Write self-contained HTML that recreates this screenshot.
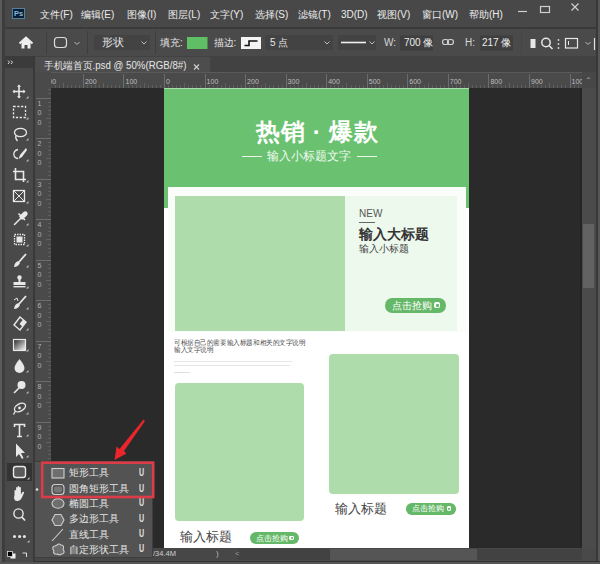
<!DOCTYPE html>
<html><head><meta charset="utf-8">
<style>
*{margin:0;padding:0;box-sizing:border-box}
html,body{width:600px;height:564px;overflow:hidden;background:#4a4a4a;font-family:"Liberation Sans",sans-serif;}
.a{position:absolute}
.t{position:absolute;white-space:nowrap;line-height:1}
svg{position:absolute;left:0;top:0;overflow:visible}
</style></head><body>

<div class="a" style="left:0px;top:0px;width:600px;height:564px;background:#494949"></div>
<div class="a" style="left:0px;top:0px;width:600px;height:27px;background:#484848"></div>
<div class="a" style="left:0px;top:27px;width:600px;height:2px;background:#3a3a3a"></div>
<div class="a" style="left:0px;top:29px;width:600px;height:27px;background:#4a4a4a"></div>
<div class="a" style="left:0px;top:0px;width:2px;height:564px;background:#5a5a5a"></div>
<div class="a" style="left:2px;top:0px;width:3px;height:564px;background:#3d3d3d"></div>
<div class="a" style="left:596px;top:0px;width:2px;height:564px;background:#383838"></div>
<div class="a" style="left:598px;top:0px;width:2px;height:564px;background:#575757"></div>
<div class="a" style="left:5px;top:56px;width:28px;height:12px;background:#3b3b3b"></div>
<div class="a" style="left:33px;top:56px;width:2px;height:508px;background:#393939"></div>
<div class="a" style="left:35px;top:56px;width:561px;height:16px;background:#424242"></div>
<div class="a" style="left:35px;top:57px;width:175px;height:15px;background:#4d4d4d"></div>
<div class="a" style="left:36px;top:72px;width:546px;height:16px;background:#4a4a4a"></div>
<div class="a" style="left:36px;top:72px;width:546px;height:1px;background:#5a5a5a"></div>
<div class="a" style="left:36px;top:88px;width:15px;height:460px;background:#4a4a4a"></div>
<div class="a" style="left:51px;top:88px;width:531px;height:460px;background:#2a2a2a"></div>
<div class="a" style="left:580px;top:88px;width:2px;height:460px;background:#252525"></div>
<div class="a" style="left:35px;top:548px;width:547px;height:13px;background:#474747"></div>
<div class="a" style="left:35px;top:561px;width:565px;height:1px;background:#333333"></div>
<div class="a" style="left:0px;top:562px;width:600px;height:2px;background:#565656"></div>
<div class="a" style="left:582px;top:72px;width:14px;height:476px;background:#4b4b4b"></div>
<div class="a" style="left:583px;top:224px;width:11px;height:64px;background:#626262"></div>
<div class="a" style="left:238px;top:549px;width:344px;height:11px;background:#424242"></div>
<div class="a" style="left:330px;top:549px;width:147px;height:11px;background:#555555"></div>
<div class="a" style="left:12px;top:7.5px;width:12.5px;height:11.5px;background:#0a1f33;border:1px solid #557d9c"></div>
<div class="t" style="left:14px;top:9.5px;font-size:7.5px;font-weight:bold;color:#8ab8dc">Ps</div>
<div class="t" style="left:40px;top:9.5px;font-size:10px;font-weight:500;color:#ececec">文件(F)</div>
<div class="t" style="left:81px;top:9.5px;font-size:10px;font-weight:500;color:#ececec">编辑(E)</div>
<div class="t" style="left:127px;top:9.5px;font-size:10px;font-weight:500;color:#ececec">图像(I)</div>
<div class="t" style="left:168px;top:9.5px;font-size:10px;font-weight:500;color:#ececec">图层(L)</div>
<div class="t" style="left:210px;top:9.5px;font-size:10px;font-weight:500;color:#ececec">文字(Y)</div>
<div class="t" style="left:255px;top:9.5px;font-size:10px;font-weight:500;color:#ececec">选择(S)</div>
<div class="t" style="left:298px;top:9.5px;font-size:10px;font-weight:500;color:#ececec">滤镜(T)</div>
<div class="t" style="left:341px;top:9.5px;font-size:10px;font-weight:500;color:#ececec">3D(D)</div>
<div class="t" style="left:377px;top:9.5px;font-size:10px;font-weight:500;color:#ececec">视图(V)</div>
<div class="t" style="left:422px;top:9.5px;font-size:10px;font-weight:500;color:#ececec">窗口(W)</div>
<div class="t" style="left:469px;top:9.5px;font-size:10px;font-weight:500;color:#ececec">帮助(H)</div>
<svg width="600" height="564" viewBox="0 0 600 564"><line x1="518" y1="11.5" x2="527" y2="11.5" stroke="#cfcfcf" stroke-width="1.2"/><rect x="540.5" y="6.5" width="9" height="6" fill="none" stroke="#cfcfcf" stroke-width="1.2"/><path d="M571.5 3.5 L578.5 10.5 M578.5 3.5 L571.5 10.5" stroke="#cfcfcf" stroke-width="1.2"/><path d="M19.5 43.5 L26 37.5 L32.5 43.5" fill="none" stroke="#f0f0f0" stroke-width="2"/><path d="M21.5 42.5 L26 38.5 L30.5 42.5 L30.5 48.5 L27.5 48.5 L27.5 45 L24.5 45 L24.5 48.5 L21.5 48.5 Z" fill="#f0f0f0"/><line x1="46.5" y1="31" x2="46.5" y2="54" stroke="#3e3e3e"/><rect x="54.5" y="37.5" width="12" height="10" rx="3" fill="none" stroke="#dcdcdc" stroke-width="1.2"/><path d="M74.5 42 L77 44.5 L79.5 42" fill="none" stroke="#bdbdbd" stroke-width="1"/><line x1="87.5" y1="31" x2="87.5" y2="54" stroke="#3e3e3e"/><rect x="94" y="35" width="56" height="15" fill="#434343"/><path d="M141.5 41.5 L144 44 L146.5 41.5" fill="none" stroke="#bdbdbd" stroke-width="1"/><line x1="155.5" y1="31" x2="155.5" y2="54" stroke="#3e3e3e"/><rect x="187" y="37" width="20.5" height="12" fill="#5fbf64"/><rect x="241" y="37" width="20" height="12" fill="#f4f4f4"/><path d="M244.5 45.5 L249 45.5 L249 41 L257.5 41" fill="none" stroke="#111" stroke-width="1.6"/><rect x="265" y="35" width="68" height="15" fill="#434343"/><path d="M324.5 41.5 L327 44 L329.5 41.5" fill="none" stroke="#bdbdbd" stroke-width="1"/><rect x="338" y="35" width="38" height="15" fill="#434343"/><line x1="341" y1="42.5" x2="366" y2="42.5" stroke="#f0f0f0" stroke-width="1.6"/><path d="M369.5 41.5 L372 44 L374.5 41.5" fill="none" stroke="#bdbdbd" stroke-width="1"/><rect x="400" y="35.5" width="33" height="15" fill="#3f3f3f"/><rect x="442.5" y="39.5" width="6" height="5" rx="2.5" fill="none" stroke="#d0d0d0" stroke-width="1.2"/><rect x="447.5" y="39.5" width="6" height="5" rx="2.5" fill="none" stroke="#d0d0d0" stroke-width="1.2"/><rect x="480" y="35.5" width="33" height="15" fill="#3f3f3f"/><line x1="521.5" y1="31" x2="521.5" y2="54" stroke="#454545"/><rect x="530.5" y="39" width="5" height="9" fill="#e6e6e6"/><circle cx="546" cy="42.5" r="4.2" fill="none" stroke="#e6e6e6" stroke-width="1.5"/><line x1="549" y1="45.5" x2="552.5" y2="49" stroke="#e6e6e6" stroke-width="1.6"/><circle cx="558.5" cy="40" r="0.9" fill="#d8d8d8"/><circle cx="558.5" cy="44" r="0.9" fill="#d8d8d8"/><circle cx="558.5" cy="48" r="0.9" fill="#d8d8d8"/><rect x="565.5" y="38.5" width="12" height="9.5" fill="none" stroke="#e6e6e6" stroke-width="1.2"/><line x1="568.5" y1="41" x2="568.5" y2="45" stroke="#e6e6e6" stroke-width="1"/><path d="M585.5 42 L588 44.5 L590.5 42" fill="none" stroke="#bdbdbd" stroke-width="1"/><line x1="594.5" y1="38" x2="594.5" y2="50" stroke="#e0e0e0" stroke-width="1.2"/><path d="M194 64.5 L199 69.5 M199 64.5 L194 69.5" stroke="#cfcfcf" stroke-width="1.1"/><path d="M8 60.5 L9.5 62.2 L8 64 M11 60.5 L12.5 62.2 L11 64" fill="none" stroke="#d8d8d8" stroke-width="1"/><line x1="55.5" y1="85.0" x2="55.5" y2="88" stroke="#5e5e5e" stroke-width="1"/><line x1="59.5" y1="85.0" x2="59.5" y2="88" stroke="#5e5e5e" stroke-width="1"/><line x1="63.5" y1="83.0" x2="63.5" y2="88" stroke="#626262" stroke-width="1"/><line x1="67.5" y1="85.0" x2="67.5" y2="88" stroke="#5e5e5e" stroke-width="1"/><line x1="71.5" y1="85.0" x2="71.5" y2="88" stroke="#5e5e5e" stroke-width="1"/><line x1="75.5" y1="85.0" x2="75.5" y2="88" stroke="#5e5e5e" stroke-width="1"/><line x1="79.5" y1="85.0" x2="79.5" y2="88" stroke="#5e5e5e" stroke-width="1"/><line x1="83.5" y1="74.0" x2="83.5" y2="88" stroke="#6c6c6c" stroke-width="1"/><line x1="87.5" y1="85.0" x2="87.5" y2="88" stroke="#5e5e5e" stroke-width="1"/><line x1="91.5" y1="85.0" x2="91.5" y2="88" stroke="#5e5e5e" stroke-width="1"/><line x1="95.5" y1="85.0" x2="95.5" y2="88" stroke="#5e5e5e" stroke-width="1"/><line x1="99.5" y1="85.0" x2="99.5" y2="88" stroke="#5e5e5e" stroke-width="1"/><line x1="103.5" y1="83.0" x2="103.5" y2="88" stroke="#626262" stroke-width="1"/><line x1="107.5" y1="85.0" x2="107.5" y2="88" stroke="#5e5e5e" stroke-width="1"/><line x1="111.5" y1="85.0" x2="111.5" y2="88" stroke="#5e5e5e" stroke-width="1"/><line x1="115.5" y1="85.0" x2="115.5" y2="88" stroke="#5e5e5e" stroke-width="1"/><line x1="119.5" y1="85.0" x2="119.5" y2="88" stroke="#5e5e5e" stroke-width="1"/><line x1="123.5" y1="74.0" x2="123.5" y2="88" stroke="#6c6c6c" stroke-width="1"/><line x1="128.5" y1="85.0" x2="128.5" y2="88" stroke="#5e5e5e" stroke-width="1"/><line x1="132.5" y1="85.0" x2="132.5" y2="88" stroke="#5e5e5e" stroke-width="1"/><line x1="136.5" y1="85.0" x2="136.5" y2="88" stroke="#5e5e5e" stroke-width="1"/><line x1="140.5" y1="85.0" x2="140.5" y2="88" stroke="#5e5e5e" stroke-width="1"/><line x1="144.5" y1="83.0" x2="144.5" y2="88" stroke="#626262" stroke-width="1"/><line x1="148.5" y1="85.0" x2="148.5" y2="88" stroke="#5e5e5e" stroke-width="1"/><line x1="152.5" y1="85.0" x2="152.5" y2="88" stroke="#5e5e5e" stroke-width="1"/><line x1="156.5" y1="85.0" x2="156.5" y2="88" stroke="#5e5e5e" stroke-width="1"/><line x1="160.5" y1="85.0" x2="160.5" y2="88" stroke="#5e5e5e" stroke-width="1"/><line x1="164.5" y1="74.0" x2="164.5" y2="88" stroke="#6c6c6c" stroke-width="1"/><line x1="168.5" y1="85.0" x2="168.5" y2="88" stroke="#5e5e5e" stroke-width="1"/><line x1="172.5" y1="85.0" x2="172.5" y2="88" stroke="#5e5e5e" stroke-width="1"/><line x1="176.5" y1="85.0" x2="176.5" y2="88" stroke="#5e5e5e" stroke-width="1"/><line x1="180.5" y1="85.0" x2="180.5" y2="88" stroke="#5e5e5e" stroke-width="1"/><line x1="184.5" y1="83.0" x2="184.5" y2="88" stroke="#626262" stroke-width="1"/><line x1="188.5" y1="85.0" x2="188.5" y2="88" stroke="#5e5e5e" stroke-width="1"/><line x1="192.5" y1="85.0" x2="192.5" y2="88" stroke="#5e5e5e" stroke-width="1"/><line x1="196.5" y1="85.0" x2="196.5" y2="88" stroke="#5e5e5e" stroke-width="1"/><line x1="200.5" y1="85.0" x2="200.5" y2="88" stroke="#5e5e5e" stroke-width="1"/><line x1="205.5" y1="74.0" x2="205.5" y2="88" stroke="#6c6c6c" stroke-width="1"/><line x1="209.5" y1="85.0" x2="209.5" y2="88" stroke="#5e5e5e" stroke-width="1"/><line x1="213.5" y1="85.0" x2="213.5" y2="88" stroke="#5e5e5e" stroke-width="1"/><line x1="217.5" y1="85.0" x2="217.5" y2="88" stroke="#5e5e5e" stroke-width="1"/><line x1="221.5" y1="85.0" x2="221.5" y2="88" stroke="#5e5e5e" stroke-width="1"/><line x1="225.5" y1="83.0" x2="225.5" y2="88" stroke="#626262" stroke-width="1"/><line x1="229.5" y1="85.0" x2="229.5" y2="88" stroke="#5e5e5e" stroke-width="1"/><line x1="233.5" y1="85.0" x2="233.5" y2="88" stroke="#5e5e5e" stroke-width="1"/><line x1="237.5" y1="85.0" x2="237.5" y2="88" stroke="#5e5e5e" stroke-width="1"/><line x1="241.5" y1="85.0" x2="241.5" y2="88" stroke="#5e5e5e" stroke-width="1"/><line x1="245.5" y1="74.0" x2="245.5" y2="88" stroke="#6c6c6c" stroke-width="1"/><line x1="249.5" y1="85.0" x2="249.5" y2="88" stroke="#5e5e5e" stroke-width="1"/><line x1="253.5" y1="85.0" x2="253.5" y2="88" stroke="#5e5e5e" stroke-width="1"/><line x1="257.5" y1="85.0" x2="257.5" y2="88" stroke="#5e5e5e" stroke-width="1"/><line x1="261.5" y1="85.0" x2="261.5" y2="88" stroke="#5e5e5e" stroke-width="1"/><line x1="265.5" y1="83.0" x2="265.5" y2="88" stroke="#626262" stroke-width="1"/><line x1="269.5" y1="85.0" x2="269.5" y2="88" stroke="#5e5e5e" stroke-width="1"/><line x1="273.5" y1="85.0" x2="273.5" y2="88" stroke="#5e5e5e" stroke-width="1"/><line x1="278.5" y1="85.0" x2="278.5" y2="88" stroke="#5e5e5e" stroke-width="1"/><line x1="282.5" y1="85.0" x2="282.5" y2="88" stroke="#5e5e5e" stroke-width="1"/><line x1="286.5" y1="74.0" x2="286.5" y2="88" stroke="#6c6c6c" stroke-width="1"/><line x1="290.5" y1="85.0" x2="290.5" y2="88" stroke="#5e5e5e" stroke-width="1"/><line x1="294.5" y1="85.0" x2="294.5" y2="88" stroke="#5e5e5e" stroke-width="1"/><line x1="298.5" y1="85.0" x2="298.5" y2="88" stroke="#5e5e5e" stroke-width="1"/><line x1="302.5" y1="85.0" x2="302.5" y2="88" stroke="#5e5e5e" stroke-width="1"/><line x1="306.5" y1="83.0" x2="306.5" y2="88" stroke="#626262" stroke-width="1"/><line x1="310.5" y1="85.0" x2="310.5" y2="88" stroke="#5e5e5e" stroke-width="1"/><line x1="314.5" y1="85.0" x2="314.5" y2="88" stroke="#5e5e5e" stroke-width="1"/><line x1="318.5" y1="85.0" x2="318.5" y2="88" stroke="#5e5e5e" stroke-width="1"/><line x1="322.5" y1="85.0" x2="322.5" y2="88" stroke="#5e5e5e" stroke-width="1"/><line x1="326.5" y1="74.0" x2="326.5" y2="88" stroke="#6c6c6c" stroke-width="1"/><line x1="330.5" y1="85.0" x2="330.5" y2="88" stroke="#5e5e5e" stroke-width="1"/><line x1="334.5" y1="85.0" x2="334.5" y2="88" stroke="#5e5e5e" stroke-width="1"/><line x1="338.5" y1="85.0" x2="338.5" y2="88" stroke="#5e5e5e" stroke-width="1"/><line x1="342.5" y1="85.0" x2="342.5" y2="88" stroke="#5e5e5e" stroke-width="1"/><line x1="346.5" y1="83.0" x2="346.5" y2="88" stroke="#626262" stroke-width="1"/><line x1="351.5" y1="85.0" x2="351.5" y2="88" stroke="#5e5e5e" stroke-width="1"/><line x1="355.5" y1="85.0" x2="355.5" y2="88" stroke="#5e5e5e" stroke-width="1"/><line x1="359.5" y1="85.0" x2="359.5" y2="88" stroke="#5e5e5e" stroke-width="1"/><line x1="363.5" y1="85.0" x2="363.5" y2="88" stroke="#5e5e5e" stroke-width="1"/><line x1="367.5" y1="74.0" x2="367.5" y2="88" stroke="#6c6c6c" stroke-width="1"/><line x1="371.5" y1="85.0" x2="371.5" y2="88" stroke="#5e5e5e" stroke-width="1"/><line x1="375.5" y1="85.0" x2="375.5" y2="88" stroke="#5e5e5e" stroke-width="1"/><line x1="379.5" y1="85.0" x2="379.5" y2="88" stroke="#5e5e5e" stroke-width="1"/><line x1="383.5" y1="85.0" x2="383.5" y2="88" stroke="#5e5e5e" stroke-width="1"/><line x1="387.5" y1="83.0" x2="387.5" y2="88" stroke="#626262" stroke-width="1"/><line x1="391.5" y1="85.0" x2="391.5" y2="88" stroke="#5e5e5e" stroke-width="1"/><line x1="395.5" y1="85.0" x2="395.5" y2="88" stroke="#5e5e5e" stroke-width="1"/><line x1="399.5" y1="85.0" x2="399.5" y2="88" stroke="#5e5e5e" stroke-width="1"/><line x1="403.5" y1="85.0" x2="403.5" y2="88" stroke="#5e5e5e" stroke-width="1"/><line x1="407.5" y1="74.0" x2="407.5" y2="88" stroke="#6c6c6c" stroke-width="1"/><line x1="411.5" y1="85.0" x2="411.5" y2="88" stroke="#5e5e5e" stroke-width="1"/><line x1="415.5" y1="85.0" x2="415.5" y2="88" stroke="#5e5e5e" stroke-width="1"/><line x1="419.5" y1="85.0" x2="419.5" y2="88" stroke="#5e5e5e" stroke-width="1"/><line x1="424.5" y1="85.0" x2="424.5" y2="88" stroke="#5e5e5e" stroke-width="1"/><line x1="428.5" y1="83.0" x2="428.5" y2="88" stroke="#626262" stroke-width="1"/><line x1="432.5" y1="85.0" x2="432.5" y2="88" stroke="#5e5e5e" stroke-width="1"/><line x1="436.5" y1="85.0" x2="436.5" y2="88" stroke="#5e5e5e" stroke-width="1"/><line x1="440.5" y1="85.0" x2="440.5" y2="88" stroke="#5e5e5e" stroke-width="1"/><line x1="444.5" y1="85.0" x2="444.5" y2="88" stroke="#5e5e5e" stroke-width="1"/><line x1="448.5" y1="74.0" x2="448.5" y2="88" stroke="#6c6c6c" stroke-width="1"/><line x1="452.5" y1="85.0" x2="452.5" y2="88" stroke="#5e5e5e" stroke-width="1"/><line x1="456.5" y1="85.0" x2="456.5" y2="88" stroke="#5e5e5e" stroke-width="1"/><line x1="460.5" y1="85.0" x2="460.5" y2="88" stroke="#5e5e5e" stroke-width="1"/><line x1="464.5" y1="85.0" x2="464.5" y2="88" stroke="#5e5e5e" stroke-width="1"/><line x1="468.5" y1="83.0" x2="468.5" y2="88" stroke="#626262" stroke-width="1"/><line x1="472.5" y1="85.0" x2="472.5" y2="88" stroke="#5e5e5e" stroke-width="1"/><line x1="476.5" y1="85.0" x2="476.5" y2="88" stroke="#5e5e5e" stroke-width="1"/><line x1="480.5" y1="85.0" x2="480.5" y2="88" stroke="#5e5e5e" stroke-width="1"/><line x1="484.5" y1="85.0" x2="484.5" y2="88" stroke="#5e5e5e" stroke-width="1"/><line x1="488.5" y1="74.0" x2="488.5" y2="88" stroke="#6c6c6c" stroke-width="1"/><line x1="492.5" y1="85.0" x2="492.5" y2="88" stroke="#5e5e5e" stroke-width="1"/><line x1="497.5" y1="85.0" x2="497.5" y2="88" stroke="#5e5e5e" stroke-width="1"/><line x1="501.5" y1="85.0" x2="501.5" y2="88" stroke="#5e5e5e" stroke-width="1"/><line x1="505.5" y1="85.0" x2="505.5" y2="88" stroke="#5e5e5e" stroke-width="1"/><line x1="509.5" y1="83.0" x2="509.5" y2="88" stroke="#626262" stroke-width="1"/><line x1="513.5" y1="85.0" x2="513.5" y2="88" stroke="#5e5e5e" stroke-width="1"/><line x1="517.5" y1="85.0" x2="517.5" y2="88" stroke="#5e5e5e" stroke-width="1"/><line x1="521.5" y1="85.0" x2="521.5" y2="88" stroke="#5e5e5e" stroke-width="1"/><line x1="525.5" y1="85.0" x2="525.5" y2="88" stroke="#5e5e5e" stroke-width="1"/><line x1="529.5" y1="74.0" x2="529.5" y2="88" stroke="#6c6c6c" stroke-width="1"/><line x1="533.5" y1="85.0" x2="533.5" y2="88" stroke="#5e5e5e" stroke-width="1"/><line x1="537.5" y1="85.0" x2="537.5" y2="88" stroke="#5e5e5e" stroke-width="1"/><line x1="541.5" y1="85.0" x2="541.5" y2="88" stroke="#5e5e5e" stroke-width="1"/><line x1="545.5" y1="85.0" x2="545.5" y2="88" stroke="#5e5e5e" stroke-width="1"/><line x1="549.5" y1="83.0" x2="549.5" y2="88" stroke="#626262" stroke-width="1"/><line x1="553.5" y1="85.0" x2="553.5" y2="88" stroke="#5e5e5e" stroke-width="1"/><line x1="557.5" y1="85.0" x2="557.5" y2="88" stroke="#5e5e5e" stroke-width="1"/><line x1="561.5" y1="85.0" x2="561.5" y2="88" stroke="#5e5e5e" stroke-width="1"/><line x1="565.5" y1="85.0" x2="565.5" y2="88" stroke="#5e5e5e" stroke-width="1"/><line x1="570.5" y1="74.0" x2="570.5" y2="88" stroke="#6c6c6c" stroke-width="1"/><line x1="574.5" y1="85.0" x2="574.5" y2="88" stroke="#5e5e5e" stroke-width="1"/><line x1="578.5" y1="85.0" x2="578.5" y2="88" stroke="#5e5e5e" stroke-width="1"/><line x1="48.0" y1="89.5" x2="51" y2="89.5" stroke="#5e5e5e" stroke-width="1"/><line x1="48.0" y1="93.5" x2="51" y2="93.5" stroke="#5e5e5e" stroke-width="1"/><line x1="36.0" y1="98.5" x2="51" y2="98.5" stroke="#6c6c6c" stroke-width="1"/><line x1="48.0" y1="102.5" x2="51" y2="102.5" stroke="#5e5e5e" stroke-width="1"/><line x1="48.0" y1="106.5" x2="51" y2="106.5" stroke="#5e5e5e" stroke-width="1"/><line x1="48.0" y1="110.5" x2="51" y2="110.5" stroke="#5e5e5e" stroke-width="1"/><line x1="48.0" y1="114.5" x2="51" y2="114.5" stroke="#5e5e5e" stroke-width="1"/><line x1="46.0" y1="118.5" x2="51" y2="118.5" stroke="#626262" stroke-width="1"/><line x1="48.0" y1="122.5" x2="51" y2="122.5" stroke="#5e5e5e" stroke-width="1"/><line x1="48.0" y1="126.5" x2="51" y2="126.5" stroke="#5e5e5e" stroke-width="1"/><line x1="48.0" y1="130.5" x2="51" y2="130.5" stroke="#5e5e5e" stroke-width="1"/><line x1="48.0" y1="134.5" x2="51" y2="134.5" stroke="#5e5e5e" stroke-width="1"/><line x1="36.0" y1="138.5" x2="51" y2="138.5" stroke="#6c6c6c" stroke-width="1"/><line x1="48.0" y1="142.5" x2="51" y2="142.5" stroke="#5e5e5e" stroke-width="1"/><line x1="48.0" y1="146.5" x2="51" y2="146.5" stroke="#5e5e5e" stroke-width="1"/><line x1="48.0" y1="150.5" x2="51" y2="150.5" stroke="#5e5e5e" stroke-width="1"/><line x1="48.0" y1="154.5" x2="51" y2="154.5" stroke="#5e5e5e" stroke-width="1"/><line x1="46.0" y1="158.5" x2="51" y2="158.5" stroke="#626262" stroke-width="1"/><line x1="48.0" y1="162.5" x2="51" y2="162.5" stroke="#5e5e5e" stroke-width="1"/><line x1="48.0" y1="166.5" x2="51" y2="166.5" stroke="#5e5e5e" stroke-width="1"/><line x1="48.0" y1="171.5" x2="51" y2="171.5" stroke="#5e5e5e" stroke-width="1"/><line x1="48.0" y1="175.5" x2="51" y2="175.5" stroke="#5e5e5e" stroke-width="1"/><line x1="36.0" y1="179.5" x2="51" y2="179.5" stroke="#6c6c6c" stroke-width="1"/><line x1="48.0" y1="183.5" x2="51" y2="183.5" stroke="#5e5e5e" stroke-width="1"/><line x1="48.0" y1="187.5" x2="51" y2="187.5" stroke="#5e5e5e" stroke-width="1"/><line x1="48.0" y1="191.5" x2="51" y2="191.5" stroke="#5e5e5e" stroke-width="1"/><line x1="48.0" y1="195.5" x2="51" y2="195.5" stroke="#5e5e5e" stroke-width="1"/><line x1="46.0" y1="199.5" x2="51" y2="199.5" stroke="#626262" stroke-width="1"/><line x1="48.0" y1="203.5" x2="51" y2="203.5" stroke="#5e5e5e" stroke-width="1"/><line x1="48.0" y1="207.5" x2="51" y2="207.5" stroke="#5e5e5e" stroke-width="1"/><line x1="48.0" y1="211.5" x2="51" y2="211.5" stroke="#5e5e5e" stroke-width="1"/><line x1="48.0" y1="215.5" x2="51" y2="215.5" stroke="#5e5e5e" stroke-width="1"/><line x1="36.0" y1="219.5" x2="51" y2="219.5" stroke="#6c6c6c" stroke-width="1"/><line x1="48.0" y1="223.5" x2="51" y2="223.5" stroke="#5e5e5e" stroke-width="1"/><line x1="48.0" y1="227.5" x2="51" y2="227.5" stroke="#5e5e5e" stroke-width="1"/><line x1="48.0" y1="231.5" x2="51" y2="231.5" stroke="#5e5e5e" stroke-width="1"/><line x1="48.0" y1="235.5" x2="51" y2="235.5" stroke="#5e5e5e" stroke-width="1"/><line x1="46.0" y1="239.5" x2="51" y2="239.5" stroke="#626262" stroke-width="1"/><line x1="48.0" y1="244.5" x2="51" y2="244.5" stroke="#5e5e5e" stroke-width="1"/><line x1="48.0" y1="248.5" x2="51" y2="248.5" stroke="#5e5e5e" stroke-width="1"/><line x1="48.0" y1="252.5" x2="51" y2="252.5" stroke="#5e5e5e" stroke-width="1"/><line x1="48.0" y1="256.5" x2="51" y2="256.5" stroke="#5e5e5e" stroke-width="1"/><line x1="36.0" y1="260.5" x2="51" y2="260.5" stroke="#6c6c6c" stroke-width="1"/><line x1="48.0" y1="264.5" x2="51" y2="264.5" stroke="#5e5e5e" stroke-width="1"/><line x1="48.0" y1="268.5" x2="51" y2="268.5" stroke="#5e5e5e" stroke-width="1"/><line x1="48.0" y1="272.5" x2="51" y2="272.5" stroke="#5e5e5e" stroke-width="1"/><line x1="48.0" y1="276.5" x2="51" y2="276.5" stroke="#5e5e5e" stroke-width="1"/><line x1="46.0" y1="280.5" x2="51" y2="280.5" stroke="#626262" stroke-width="1"/><line x1="48.0" y1="284.5" x2="51" y2="284.5" stroke="#5e5e5e" stroke-width="1"/><line x1="48.0" y1="288.5" x2="51" y2="288.5" stroke="#5e5e5e" stroke-width="1"/><line x1="48.0" y1="292.5" x2="51" y2="292.5" stroke="#5e5e5e" stroke-width="1"/><line x1="48.0" y1="296.5" x2="51" y2="296.5" stroke="#5e5e5e" stroke-width="1"/><line x1="36.0" y1="300.5" x2="51" y2="300.5" stroke="#6c6c6c" stroke-width="1"/><line x1="48.0" y1="304.5" x2="51" y2="304.5" stroke="#5e5e5e" stroke-width="1"/><line x1="48.0" y1="308.5" x2="51" y2="308.5" stroke="#5e5e5e" stroke-width="1"/><line x1="48.0" y1="312.5" x2="51" y2="312.5" stroke="#5e5e5e" stroke-width="1"/><line x1="48.0" y1="317.5" x2="51" y2="317.5" stroke="#5e5e5e" stroke-width="1"/><line x1="46.0" y1="321.5" x2="51" y2="321.5" stroke="#626262" stroke-width="1"/><line x1="48.0" y1="325.5" x2="51" y2="325.5" stroke="#5e5e5e" stroke-width="1"/><line x1="48.0" y1="329.5" x2="51" y2="329.5" stroke="#5e5e5e" stroke-width="1"/><line x1="48.0" y1="333.5" x2="51" y2="333.5" stroke="#5e5e5e" stroke-width="1"/><line x1="48.0" y1="337.5" x2="51" y2="337.5" stroke="#5e5e5e" stroke-width="1"/><line x1="36.0" y1="341.5" x2="51" y2="341.5" stroke="#6c6c6c" stroke-width="1"/><line x1="48.0" y1="345.5" x2="51" y2="345.5" stroke="#5e5e5e" stroke-width="1"/><line x1="48.0" y1="349.5" x2="51" y2="349.5" stroke="#5e5e5e" stroke-width="1"/><line x1="48.0" y1="353.5" x2="51" y2="353.5" stroke="#5e5e5e" stroke-width="1"/><line x1="48.0" y1="357.5" x2="51" y2="357.5" stroke="#5e5e5e" stroke-width="1"/><line x1="46.0" y1="361.5" x2="51" y2="361.5" stroke="#626262" stroke-width="1"/><line x1="48.0" y1="365.5" x2="51" y2="365.5" stroke="#5e5e5e" stroke-width="1"/><line x1="48.0" y1="369.5" x2="51" y2="369.5" stroke="#5e5e5e" stroke-width="1"/><line x1="48.0" y1="373.5" x2="51" y2="373.5" stroke="#5e5e5e" stroke-width="1"/><line x1="48.0" y1="377.5" x2="51" y2="377.5" stroke="#5e5e5e" stroke-width="1"/><line x1="36.0" y1="381.5" x2="51" y2="381.5" stroke="#6c6c6c" stroke-width="1"/><line x1="48.0" y1="385.5" x2="51" y2="385.5" stroke="#5e5e5e" stroke-width="1"/><line x1="48.0" y1="390.5" x2="51" y2="390.5" stroke="#5e5e5e" stroke-width="1"/><line x1="48.0" y1="394.5" x2="51" y2="394.5" stroke="#5e5e5e" stroke-width="1"/><line x1="48.0" y1="398.5" x2="51" y2="398.5" stroke="#5e5e5e" stroke-width="1"/><line x1="46.0" y1="402.5" x2="51" y2="402.5" stroke="#626262" stroke-width="1"/><line x1="48.0" y1="406.5" x2="51" y2="406.5" stroke="#5e5e5e" stroke-width="1"/><line x1="48.0" y1="410.5" x2="51" y2="410.5" stroke="#5e5e5e" stroke-width="1"/><line x1="48.0" y1="414.5" x2="51" y2="414.5" stroke="#5e5e5e" stroke-width="1"/><line x1="48.0" y1="418.5" x2="51" y2="418.5" stroke="#5e5e5e" stroke-width="1"/><line x1="36.0" y1="422.5" x2="51" y2="422.5" stroke="#6c6c6c" stroke-width="1"/><line x1="48.0" y1="426.5" x2="51" y2="426.5" stroke="#5e5e5e" stroke-width="1"/><line x1="48.0" y1="430.5" x2="51" y2="430.5" stroke="#5e5e5e" stroke-width="1"/><line x1="48.0" y1="434.5" x2="51" y2="434.5" stroke="#5e5e5e" stroke-width="1"/><line x1="48.0" y1="438.5" x2="51" y2="438.5" stroke="#5e5e5e" stroke-width="1"/><line x1="46.0" y1="442.5" x2="51" y2="442.5" stroke="#626262" stroke-width="1"/><line x1="48.0" y1="446.5" x2="51" y2="446.5" stroke="#5e5e5e" stroke-width="1"/><line x1="48.0" y1="450.5" x2="51" y2="450.5" stroke="#5e5e5e" stroke-width="1"/><line x1="48.0" y1="454.5" x2="51" y2="454.5" stroke="#5e5e5e" stroke-width="1"/><line x1="48.0" y1="458.5" x2="51" y2="458.5" stroke="#5e5e5e" stroke-width="1"/><line x1="36.0" y1="462.5" x2="51" y2="462.5" stroke="#6c6c6c" stroke-width="1"/><line x1="48.0" y1="467.5" x2="51" y2="467.5" stroke="#5e5e5e" stroke-width="1"/><line x1="48.0" y1="471.5" x2="51" y2="471.5" stroke="#5e5e5e" stroke-width="1"/><line x1="48.0" y1="475.5" x2="51" y2="475.5" stroke="#5e5e5e" stroke-width="1"/><line x1="48.0" y1="479.5" x2="51" y2="479.5" stroke="#5e5e5e" stroke-width="1"/><line x1="46.0" y1="483.5" x2="51" y2="483.5" stroke="#626262" stroke-width="1"/><line x1="48.0" y1="487.5" x2="51" y2="487.5" stroke="#5e5e5e" stroke-width="1"/><line x1="48.0" y1="491.5" x2="51" y2="491.5" stroke="#5e5e5e" stroke-width="1"/><line x1="48.0" y1="495.5" x2="51" y2="495.5" stroke="#5e5e5e" stroke-width="1"/><line x1="48.0" y1="499.5" x2="51" y2="499.5" stroke="#5e5e5e" stroke-width="1"/><line x1="36.0" y1="503.5" x2="51" y2="503.5" stroke="#6c6c6c" stroke-width="1"/><line x1="48.0" y1="507.5" x2="51" y2="507.5" stroke="#5e5e5e" stroke-width="1"/><line x1="48.0" y1="511.5" x2="51" y2="511.5" stroke="#5e5e5e" stroke-width="1"/><line x1="48.0" y1="515.5" x2="51" y2="515.5" stroke="#5e5e5e" stroke-width="1"/><line x1="48.0" y1="519.5" x2="51" y2="519.5" stroke="#5e5e5e" stroke-width="1"/><line x1="46.0" y1="523.5" x2="51" y2="523.5" stroke="#626262" stroke-width="1"/><line x1="48.0" y1="527.5" x2="51" y2="527.5" stroke="#5e5e5e" stroke-width="1"/><line x1="48.0" y1="531.5" x2="51" y2="531.5" stroke="#5e5e5e" stroke-width="1"/><line x1="48.0" y1="535.5" x2="51" y2="535.5" stroke="#5e5e5e" stroke-width="1"/><line x1="48.0" y1="540.5" x2="51" y2="540.5" stroke="#5e5e5e" stroke-width="1"/><line x1="36.0" y1="544.5" x2="51" y2="544.5" stroke="#6c6c6c" stroke-width="1"/><path d="M19 85.5 V97.5 M13 91.5 H25" stroke="#e8e8e8" stroke-width="1.6"/><path d="M19 84.5 l-2 2.2 h4z M19 98.5 l-2 -2.2 h4z M12.5 91.5 l2.2 -2 v4z M25.5 91.5 l-2.2 -2 v4z" fill="#e8e8e8"/><path d="M26.0 98.5 l2.5 0 l0 -2.5 z" fill="#bdbdbd"/><rect x="13.5" y="106.5" width="12" height="11" fill="none" stroke="#e8e8e8" stroke-width="1.3" stroke-dasharray="2.2 1.6"/><path d="M26.0 119.5 l2.5 0 l0 -2.5 z" fill="#bdbdbd"/><ellipse cx="20.5" cy="132.5" rx="6" ry="4.2" fill="none" stroke="#e8e8e8" stroke-width="1.3"/><path d="M16 135.5 q-1 3 1.5 5.5" fill="none" stroke="#e8e8e8" stroke-width="1.3"/><path d="M26.0 140.5 l2.5 0 l0 -2.5 z" fill="#bdbdbd"/><path d="M18 149.5 q-5 1 -4 6 q1 3 4 3" fill="none" stroke="#e8e8e8" stroke-width="1.3"/><path d="M26 148 L20 155 L18.5 159 L22 157 L27 150 Z" fill="#e8e8e8"/><path d="M26.0 161.5 l2.5 0 l0 -2.5 z" fill="#bdbdbd"/><path d="M15.5 168 V179.5 H26 M13 171.5 H23.5 V182" fill="none" stroke="#e8e8e8" stroke-width="1.6"/><path d="M26.0 182.5 l2.5 0 l0 -2.5 z" fill="#bdbdbd"/><rect x="13.5" y="190.5" width="11" height="11" fill="none" stroke="#e8e8e8" stroke-width="1.3"/><path d="M13.5 190.5 L24.5 201.5 M24.5 190.5 L13.5 201.5" stroke="#e8e8e8" stroke-width="1"/><path d="M26.0 203.5 l2.5 0 l0 -2.5 z" fill="#bdbdbd"/><path d="M14.5 224.5 L21 218" stroke="#e8e8e8" stroke-width="1.5" stroke-linecap="round"/><path d="M19 216.5 L23.5 212 q2 -1.5 3.5 0 q1.5 1.5 0 3.5 L22 220 Z" fill="#e8e8e8"/><path d="M18.5 213.5 L25 220" stroke="#e8e8e8" stroke-width="1.6"/><path d="M26.0 225.5 l2.5 0 l0 -2.5 z" fill="#bdbdbd"/><rect x="14.5" y="234.5" width="10" height="10" fill="none" stroke="#e8e8e8" stroke-width="1.3" stroke-dasharray="1.5 1"/><rect x="16.5" y="236.5" width="6" height="6" fill="#e8e8e8"/><path d="M26.0 246.5 l2.5 0 l0 -2.5 z" fill="#bdbdbd"/><path d="M26 254 L19 262" stroke="#e8e8e8" stroke-width="1.8"/><path d="M18.5 261 q-4 1 -4.5 6 q4 0 6 -4 z" fill="#e8e8e8"/><path d="M26.0 267.5 l2.5 0 l0 -2.5 z" fill="#bdbdbd"/><circle cx="19.5" cy="277.5" r="2.2" fill="#e8e8e8"/><rect x="18.5" y="279" width="2" height="3" fill="#e8e8e8"/><rect x="13.5" y="282" width="12" height="3" fill="#e8e8e8"/><rect x="13.5" y="286" width="12" height="1.4" fill="#e8e8e8"/><path d="M26.0 288.5 l2.5 0 l0 -2.5 z" fill="#bdbdbd"/><path d="M26 296 L19 304" stroke="#e8e8e8" stroke-width="1.8"/><path d="M18.5 303 q-4 1 -4.5 6 q4 0 6 -4 z" fill="#e8e8e8"/><path d="M14 300 l3 -2 l1 3" fill="none" stroke="#e8e8e8" stroke-width="1"/><path d="M26.0 309.5 l2.5 0 l0 -2.5 z" fill="#bdbdbd"/><path d="M20 317 L26 322 L20 330 L14 325 Z" fill="none" stroke="#e8e8e8" stroke-width="1.4"/><path d="M23 319.5 L26 322 L22.5 326.5 L19.5 324 Z" fill="#e8e8e8"/><path d="M26.0 330.5 l2.5 0 l0 -2.5 z" fill="#bdbdbd"/><defs><linearGradient id="gr" x1="0" x2="1" y1="0" y2="1"><stop offset="0" stop-color="#222"/><stop offset="1" stop-color="#fff"/></linearGradient></defs><rect x="13.5" y="339.5" width="12" height="11" fill="url(#gr)" stroke="#e8e8e8" stroke-width="1.2"/><path d="M26.0 351.5 l2.5 0 l0 -2.5 z" fill="#bdbdbd"/><path d="M19.5 359 q-5 6 -5 9 a5 5 0 0 0 10 0 q0 -3 -5 -9z" fill="#e8e8e8"/><path d="M26.0 372.5 l2.5 0 l0 -2.5 z" fill="#bdbdbd"/><circle cx="21.5" cy="385" r="4" fill="#e8e8e8"/><path d="M19 388 L14 393" stroke="#e8e8e8" stroke-width="1.6"/><path d="M26.0 393.5 l2.5 0 l0 -2.5 z" fill="#bdbdbd"/><ellipse cx="20" cy="407.5" rx="6" ry="3.6" transform="rotate(-30 20 407.5)" fill="none" stroke="#e8e8e8" stroke-width="1.4"/><circle cx="19.5" cy="408" r="1.4" fill="#e8e8e8"/><path d="M15.5 411 L13.5 414.5" stroke="#e8e8e8" stroke-width="1.3"/><path d="M26.0 414.5 l2.5 0 l0 -2.5 z" fill="#bdbdbd"/><path d="M14.5 427 V424.5 H24.5 V427 M19.5 424.5 V436.5 M17 436.5 H22" fill="none" stroke="#e8e8e8" stroke-width="1.6"/><path d="M26.0 436.5 l2.5 0 l0 -2.5 z" fill="#bdbdbd"/><path d="M16 443.5 L16 457 L19 454 L22 459 L23.5 458 L21 453 L25 453 Z" fill="#e8e8e8"/><path d="M26.0 457.5 l2.5 0 l0 -2.5 z" fill="#bdbdbd"/><rect x="7" y="463" width="25" height="18" fill="#343434"/><rect x="13.5" y="466.5" width="12" height="11" rx="2.5" fill="#5a5a5a" stroke="#e8e8e8" stroke-width="1.4"/><path d="M27.0 479.5 l2.5 0 l0 -2.5 z" fill="#bdbdbd"/><path d="M14.5 495 v-4.5 q0.8 -1 1.6 0 v3.5 v-6.5 q0.8 -1 1.6 0 v6 v-7 q0.8 -1 1.6 0 v7 v-6 q0.8 -1 1.6 0 v7 l1.5 -2.5 q1.2 -0.8 1.8 0.4 l-2.5 5.5 q-1.5 3 -4.5 3 q-3 0 -3.2 -3.5 z" fill="#e8e8e8"/><circle cx="18.5" cy="513.5" r="4.6" fill="none" stroke="#e8e8e8" stroke-width="1.4"/><line x1="21.8" y1="517" x2="25" y2="520.5" stroke="#e8e8e8" stroke-width="1.8"/><circle cx="14.5" cy="536.4" r="1.5" fill="#e8e8e8"/><circle cx="19.6" cy="536.4" r="1.5" fill="#e8e8e8"/><circle cx="24.4" cy="536.4" r="1.5" fill="#e8e8e8"/><path d="M27.0 542.5 l2.5 0 l0 -2.5 z" fill="#bdbdbd"/><rect x="10.5" y="553.5" width="5" height="5" fill="#f0f0f0"/><rect x="7.5" y="551.5" width="5" height="5" fill="#000" stroke="#ddd" stroke-width="0.8"/><path d="M22.5 553 h4 v4" fill="none" stroke="#ddd" stroke-width="1"/></svg>
<div class="t" style="left:44.4px;top:78px;font-size:7px;color:#bdbdbd">300</div>
<div class="t" style="left:84.9px;top:78px;font-size:7px;color:#bdbdbd">200</div>
<div class="t" style="left:125.5px;top:78px;font-size:7px;color:#bdbdbd">100</div>
<div class="t" style="left:166.0px;top:78px;font-size:7px;color:#bdbdbd">0</div>
<div class="t" style="left:206.6px;top:78px;font-size:7px;color:#bdbdbd">100</div>
<div class="t" style="left:247.1px;top:78px;font-size:7px;color:#bdbdbd">200</div>
<div class="t" style="left:287.6px;top:78px;font-size:7px;color:#bdbdbd">300</div>
<div class="t" style="left:328.2px;top:78px;font-size:7px;color:#bdbdbd">400</div>
<div class="t" style="left:368.8px;top:78px;font-size:7px;color:#bdbdbd">500</div>
<div class="t" style="left:409.3px;top:78px;font-size:7px;color:#bdbdbd">600</div>
<div class="t" style="left:449.8px;top:78px;font-size:7px;color:#bdbdbd">700</div>
<div class="t" style="left:490.4px;top:78px;font-size:7px;color:#bdbdbd">800</div>
<div class="t" style="left:531.0px;top:78px;font-size:7px;color:#bdbdbd">900</div>
<div class="t" style="left:571.5px;top:78px;font-size:7px;color:#bdbdbd">1000</div>
<div class="a" style="left:36px;top:72px;width:15px;height:16px;background:#4a4a4a"></div>
<div class="a" style="left:582px;top:72px;width:14px;height:16px;background:#474747"></div>
<div class="t" style="left:585px;top:77px;font-size:8px;color:#aaa">&#8963;</div>
<div class="t" style="left:37.5px;top:99.5px;font-size:7px;color:#b4b4b4">1</div>
<div class="t" style="left:37.5px;top:109.0px;font-size:7px;color:#b4b4b4">0</div>
<div class="t" style="left:37.5px;top:118.5px;font-size:7px;color:#b4b4b4">0</div>
<div class="t" style="left:37.5px;top:140.1px;font-size:7px;color:#b4b4b4">2</div>
<div class="t" style="left:37.5px;top:149.6px;font-size:7px;color:#b4b4b4">0</div>
<div class="t" style="left:37.5px;top:159.1px;font-size:7px;color:#b4b4b4">0</div>
<div class="t" style="left:37.5px;top:180.6px;font-size:7px;color:#b4b4b4">3</div>
<div class="t" style="left:37.5px;top:190.1px;font-size:7px;color:#b4b4b4">0</div>
<div class="t" style="left:37.5px;top:199.6px;font-size:7px;color:#b4b4b4">0</div>
<div class="t" style="left:37.5px;top:221.2px;font-size:7px;color:#b4b4b4">4</div>
<div class="t" style="left:37.5px;top:230.7px;font-size:7px;color:#b4b4b4">0</div>
<div class="t" style="left:37.5px;top:240.2px;font-size:7px;color:#b4b4b4">0</div>
<div class="t" style="left:37.5px;top:261.8px;font-size:7px;color:#b4b4b4">5</div>
<div class="t" style="left:37.5px;top:271.2px;font-size:7px;color:#b4b4b4">0</div>
<div class="t" style="left:37.5px;top:280.8px;font-size:7px;color:#b4b4b4">0</div>
<div class="t" style="left:37.5px;top:302.3px;font-size:7px;color:#b4b4b4">6</div>
<div class="t" style="left:37.5px;top:311.8px;font-size:7px;color:#b4b4b4">0</div>
<div class="t" style="left:37.5px;top:321.3px;font-size:7px;color:#b4b4b4">0</div>
<div class="t" style="left:37.5px;top:342.8px;font-size:7px;color:#b4b4b4">7</div>
<div class="t" style="left:37.5px;top:352.3px;font-size:7px;color:#b4b4b4">0</div>
<div class="t" style="left:37.5px;top:361.8px;font-size:7px;color:#b4b4b4">0</div>
<div class="t" style="left:37.5px;top:383.4px;font-size:7px;color:#b4b4b4">8</div>
<div class="t" style="left:37.5px;top:392.9px;font-size:7px;color:#b4b4b4">0</div>
<div class="t" style="left:37.5px;top:402.4px;font-size:7px;color:#b4b4b4">0</div>
<div class="t" style="left:37.5px;top:423.9px;font-size:7px;color:#b4b4b4">9</div>
<div class="t" style="left:37.5px;top:433.4px;font-size:7px;color:#b4b4b4">0</div>
<div class="t" style="left:37.5px;top:442.9px;font-size:7px;color:#b4b4b4">0</div>
<div class="t" style="left:37.5px;top:464.5px;font-size:7px;color:#b4b4b4">1</div>
<div class="t" style="left:37.5px;top:474.0px;font-size:7px;color:#b4b4b4">0</div>
<div class="t" style="left:37.5px;top:483.5px;font-size:7px;color:#b4b4b4">0</div>
<div class="t" style="left:37.5px;top:505.0px;font-size:7px;color:#b4b4b4">1</div>
<div class="t" style="left:37.5px;top:514.5px;font-size:7px;color:#b4b4b4">1</div>
<div class="t" style="left:37.5px;top:524.0px;font-size:7px;color:#b4b4b4">0</div>
<div class="t" style="left:102px;top:36.5px;font-size:10.5px;font-weight:500;color:#e6e6e6">形状</div>
<div class="t" style="left:160px;top:38px;font-size:10px;font-weight:500;color:#e0e0e0">填充:</div>
<div class="t" style="left:213.5px;top:38px;font-size:10px;font-weight:500;color:#e0e0e0">描边:</div>
<div class="t" style="left:270px;top:38px;font-size:10px;font-weight:500;color:#e6e6e6">5 点</div>
<div class="t" style="left:384px;top:38px;font-size:10px;font-weight:500;color:#d6d6d6">W:</div>
<div class="t" style="left:404px;top:38px;font-size:10px;font-weight:500;color:#ececec">700 像</div>
<div class="t" style="left:465px;top:38px;font-size:10px;font-weight:500;color:#d6d6d6">H:</div>
<div class="t" style="left:482px;top:38px;font-size:10px;font-weight:500;color:#ececec">217 像</div>
<div class="t" style="left:43.5px;top:61px;font-size:10px;font-weight:500;color:#e6e6e6;transform:scaleX(0.97);transform-origin:0 0">手机端首页.psd @ 50%(RGB/8#)</div>
<div class="t" style="left:153px;top:550px;font-size:7.5px;color:#d0d0d0">/34.4M</div>
<div class="t" style="left:216px;top:549.5px;font-size:8px;color:#bbb">)</div>
<div class="t" style="left:235px;top:549.5px;font-size:8px;color:#999">&lt;</div>
<div class="a" style="left:164px;top:88px;width:305px;height:460px;background:#fff;overflow:hidden">
<div class="a" style="left:0;top:0;width:305px;height:120px;background:#6ac270;border-top:1px solid #a8e0ab"></div>
<div class="t" style="left:92px;top:32px;font-size:24px;font-weight:bold;color:#fff;letter-spacing:0.7px">热销 · 爆款</div>
<div class="a" style="left:78px;top:67.5px;width:20px;height:1px;background:#e8f5e8"></div>
<div class="a" style="left:193px;top:67.5px;width:20px;height:1px;background:#e8f5e8"></div>
<div class="t" style="left:103px;top:61.5px;font-size:12px;color:#f2faf2">输入小标题文字</div>
<div class="a" style="left:4px;top:99px;width:298px;height:145px;background:#fafdfa"></div>
<div class="a" style="left:11px;top:108px;width:170px;height:135px;background:#afdcab"></div>
<div class="a" style="left:181px;top:108px;width:112px;height:135px;background:#eef9ee"></div>
<div class="t" style="left:195px;top:120.5px;font-size:10px;color:#555;letter-spacing:0px">NEW</div>
<div class="a" style="left:195px;top:133.5px;width:16px;height:1px;background:#666"></div>
<div class="t" style="left:195px;top:140px;font-size:13.5px;font-weight:bold;color:#333">输入大标题</div>
<div class="t" style="left:195px;top:155.5px;font-size:10px;color:#444">输入小标题</div>
<div class="a" style="left:221px;top:210px;width:61px;height:14.5px;background:#64b868;border-radius:7.25px"></div>
<div class="t" style="left:227.96px;top:212.55px;font-size:10px;font-weight:500;color:#fff">点击抢购</div>
<div class="a" style="left:270.1px;top:214.05px;width:6.4px;height:6.4px;background:#fff;border-radius:1.92px"></div>
<div class="a" style="left:271.86px;top:215.81px;width:2.8800000000000003px;height:2.8800000000000003px;background:#64b868;border-radius:0.96px"></div>
<div class="t" style="left:10px;top:251.5px;font-size:6.5px;color:#4a4a4a;transform:scaleX(0.94);transform-origin:0 0">可根据自己的需要输入标题和相关的文字说明</div>
<div class="t" style="left:10px;top:258.5px;font-size:6.5px;color:#4a4a4a;transform:scaleX(0.94);transform-origin:0 0">输入文字说明</div>
<div class="a" style="left:10px;top:272.5px;width:118px;height:1.5px;background:#e6e6e6"></div>
<div class="a" style="left:10px;top:276.5px;width:116px;height:1.5px;background:#e6e6e6"></div>
<div class="a" style="left:10px;top:283.5px;width:16px;height:1px;background:#dedede"></div>
<div class="a" style="left:11px;top:295px;width:129px;height:137.5px;background:#afdcab;border-radius:4px"></div>
<div class="a" style="left:165px;top:266px;width:130px;height:140px;background:#afdcab;border-radius:4px"></div>
<div class="t" style="left:16px;top:442px;font-size:13px;color:#444">输入标题</div>
<div class="t" style="left:171px;top:414px;font-size:13px;color:#444">输入标题</div>
<div class="a" style="left:86px;top:444px;width:49px;height:12px;background:#64b868;border-radius:6.0px"></div>
<div class="t" style="left:91.76px;top:446.55px;font-size:7.5px;font-weight:500;color:#fff">点击抢购</div>
<div class="a" style="left:125.39999999999999px;top:447.6px;width:4.8px;height:4.8px;background:#fff;border-radius:1.44px"></div>
<div class="a" style="left:126.72px;top:448.92px;width:2.16px;height:2.16px;background:#64b868;border-radius:0.72px"></div>
<div class="a" style="left:242px;top:415px;width:50px;height:11.5px;background:#64b868;border-radius:5.75px"></div>
<div class="t" style="left:247.52px;top:417.3px;font-size:7.5px;font-weight:500;color:#fff">点击抢购</div>
<div class="a" style="left:282.70000000000005px;top:418.35px;width:4.8px;height:4.8px;background:#fff;border-radius:1.44px"></div>
<div class="a" style="left:284.02000000000004px;top:419.67px;width:2.16px;height:2.16px;background:#64b868;border-radius:0.72px"></div>
</div>
<div class="a" style="left:34px;top:461px;width:119px;height:97px;background:#535353;border:1px solid #3e3e3e"></div>
<div class="t" style="left:69px;top:467.9px;font-size:10px;font-weight:500;color:#e6e6e6">矩形工具</div>
<div class="t" style="left:139.3px;top:466.8px;font-size:11.5px;font-weight:bold;color:#e0e0e0;transform:scaleX(0.62);transform-origin:0 0">U</div>
<div class="t" style="left:69px;top:483.9px;font-size:10px;font-weight:500;color:#e6e6e6">圆角矩形工具</div>
<div class="t" style="left:139.3px;top:482.8px;font-size:11.5px;font-weight:bold;color:#e0e0e0;transform:scaleX(0.62);transform-origin:0 0">U</div>
<div class="t" style="left:69px;top:498.5px;font-size:10px;font-weight:500;color:#e6e6e6">椭圆工具</div>
<div class="t" style="left:139.3px;top:497.4px;font-size:11.5px;font-weight:bold;color:#e0e0e0;transform:scaleX(0.62);transform-origin:0 0">U</div>
<div class="t" style="left:69px;top:514.3px;font-size:10px;font-weight:500;color:#e6e6e6">多边形工具</div>
<div class="t" style="left:139.3px;top:513.2px;font-size:11.5px;font-weight:bold;color:#e0e0e0;transform:scaleX(0.62);transform-origin:0 0">U</div>
<div class="t" style="left:69px;top:529.5px;font-size:10px;font-weight:500;color:#e6e6e6">直线工具</div>
<div class="t" style="left:139.3px;top:528.4px;font-size:11.5px;font-weight:bold;color:#e0e0e0;transform:scaleX(0.62);transform-origin:0 0">U</div>
<div class="t" style="left:69px;top:544.5px;font-size:10px;font-weight:500;color:#e6e6e6">自定形状工具</div>
<div class="t" style="left:139.3px;top:543.4px;font-size:11.5px;font-weight:bold;color:#e0e0e0;transform:scaleX(0.62);transform-origin:0 0">U</div>
<svg width="600" height="564" viewBox="0 0 600 564"><rect x="52" y="468.5" width="12" height="9.5" fill="#6e6e6e" stroke="#cfcfcf" stroke-width="1.1"/><rect x="52" y="484.5" width="12" height="10" rx="3" fill="none" stroke="#cfcfcf" stroke-width="1.1"/><rect x="54" y="486.5" width="8" height="6" rx="2" fill="#777"/><ellipse cx="58" cy="503.5" rx="6" ry="4.7" fill="#6e6e6e" stroke="#cfcfcf" stroke-width="1.1"/><path d="M55 514.5 L61 514.5 L64 520 L61 525.5 L55 525.5 L52 520 Z" fill="#6e6e6e" stroke="#cfcfcf" stroke-width="1.1"/><line x1="52" y1="541" x2="63" y2="529" stroke="#cfcfcf" stroke-width="1.1"/><path d="M57 545 q2 -2 4 0 q3 0 2.5 3 q-1 1.5 0.5 3 q0.5 3 -2.5 3 q-2 1.5 -4 0 q-3 1 -4 -1.5 q1 -2 -0.5 -3 q-1 -3 2 -3.5 z" fill="#6e6e6e" stroke="#cfcfcf" stroke-width="1.1"/><circle cx="37" cy="489.5" r="1.3" fill="#e0e0e0"/><rect x="42.2" y="462.7" width="111" height="34.3" fill="none" stroke="#dc3c48" stroke-width="2.6"/><path d="M143.5 419.5 L145 421 L124 451 L126.5 453.5 L114.5 460 L116.5 446.5 L119.5 449 Z" fill="#e8262c"/></svg>
</body></html>
